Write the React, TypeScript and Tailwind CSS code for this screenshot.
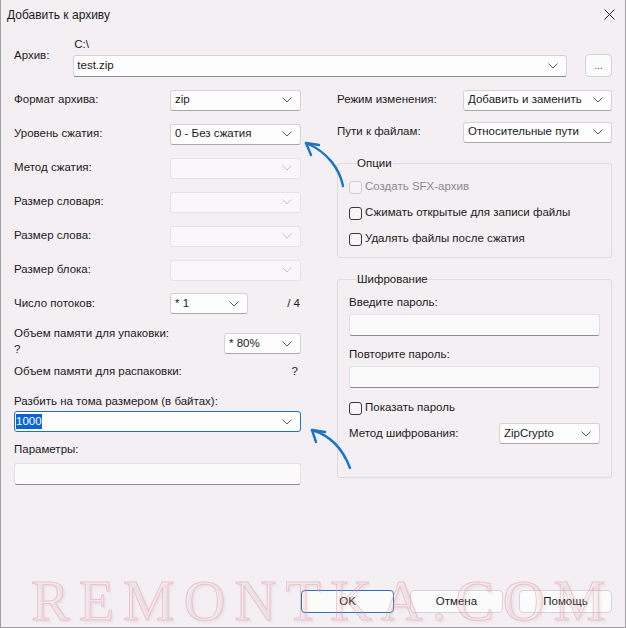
import React from 'react';

const Chevron = ({ disabled }: { disabled?: boolean }) => (
  <svg width="10" height="6" viewBox="0 0 10 6" className="shrink-0">
    <path d="M0.5 0.5L5 5L9.5 0.5" fill="none" stroke={disabled ? '#c4c2c4' : '#5a5a5a'} strokeWidth="1" />
  </svg>
);

interface SelectProps {
  value?: string;
  width: string;
  disabled?: boolean;
}

const Select: React.FC<SelectProps> = ({ value, width, disabled }) => (
  <div
    className={
      disabled
        ? `${width} h-[21px] flex items-center justify-between pl-[4px] pr-[8px] rounded-[3px] border border-[#e6e3e6] bg-[#f9f7f9]`
        : `${width} h-[21px] flex items-center justify-between pl-[4px] pr-[8px] rounded-[3px] border border-[#d4d2d4] border-b-[#a9a7a9] bg-[#fdfdfd]`
    }
  >
    <span className="leading-none whitespace-nowrap">{value}</span>
    <Chevron disabled={disabled} />
  </div>
);

const TextBox = ({ width }: { width: string }) => (
  <div className={`${width} h-[22px] rounded-[3px] border border-[#e2e0e2] border-b-[#8d8b8d] bg-[#fbfafb]`} />
);

const Checkbox = ({ label, disabled }: { label: string; disabled?: boolean }) => (
  <div className="flex items-center gap-[3px]">
    <div
      className={
        disabled
          ? 'w-[13px] h-[13px] rounded-[3px] border border-[#cfcccf] bg-[#f5f3f5]'
          : 'w-[13px] h-[13px] rounded-[3px] border border-[#3a3a3a] bg-[#f7f5f7]'
      }
    />
    <span className={disabled ? 'text-[#8e8c8e]' : ''}>{label}</span>
  </div>
);

const Row = ({ label, children }: { label: string; children: React.ReactNode }) => (
  <div className="h-[34px] flex items-center justify-between">
    <span>{label}</span>
    {children}
  </div>
);

const Button = ({ label, primary }: { label: string; primary?: boolean }) => (
  <div
    className={
      primary
        ? 'w-[93px] h-[23px] flex items-center justify-center rounded-[4px] border border-[#2a72b8] bg-[#fbfbfb]'
        : 'w-[93px] h-[23px] flex items-center justify-center rounded-[4px] border border-[#d6d4d6] bg-[#fbfbfb]'
    }
  >
    {label}
  </div>
);

export default function App() {
  return (
    <div className="w-[626px] h-[628px] relative overflow-hidden bg-[#f3eff3] border-x border-b border-[#9e9c9e] font-['Liberation_Sans',Arial,sans-serif] text-[11.5px] text-[#1b1b1b] flex flex-col">
      {/* title bar */}
      <div className="h-[29px] flex items-center justify-between pl-[6px] pr-[10px]">
        <span className="text-[12px]">Добавить к архиву</span>
        <svg width="11" height="11" viewBox="0 0 11 11">
          <path d="M0.5 0.5L10.5 10.5M10.5 0.5L0.5 10.5" stroke="#222" strokeWidth="1" />
        </svg>
      </div>

      {/* archive path */}
      <div className="flex pl-[13px] pr-[13px] mt-[8px]">
        <span className="w-[60px] pt-[10px]">Архив:</span>
        <div className="flex flex-col">
          <span className="h-[14px] leading-[14px] pl-[1px]">C:\</span>
          <div className="mt-[4px] w-[494px] h-[22px] flex items-center justify-between pl-[3px] pr-[8px] rounded-[3px] border border-[#d4d2d4] border-b-[#8d8b8d] bg-[#fdfdfd]">
            <span>test.zip</span>
            <Chevron />
          </div>
        </div>
        <div className="ml-[18px] mt-[17px] w-[27px] h-[23px] rounded-[4px] border border-[#d4d2d4] bg-[#fbfbfb] flex items-end justify-center pb-[5px] text-[10px] leading-none text-[#5a3c8c]">
          ...
        </div>
      </div>

      {/* two columns */}
      <div className="flex pl-[13px] pr-[13px] mt-[6px]">
        {/* left column */}
        <div className="w-[287px] flex flex-col">
          <Row label="Формат архива:"><Select value="zip" width="w-[131px]" /></Row>
          <Row label="Уровень сжатия:"><Select value="0 - Без сжатия" width="w-[131px]" /></Row>
          <Row label="Метод сжатия:"><Select width="w-[131px]" disabled /></Row>
          <Row label="Размер словаря:"><Select width="w-[131px]" disabled /></Row>
          <Row label="Размер слова:"><Select width="w-[131px]" disabled /></Row>
          <Row label="Размер блока:"><Select width="w-[131px]" disabled /></Row>
          <div className="h-[33px] flex items-center">
            <span className="w-[156px]">Число потоков:</span>
            <Select value="* 1" width="w-[78px]" />
            <span className="ml-auto pr-[1px]">/ 4</span>
          </div>
          <div className="mt-[5px] flex justify-between items-start">
            <div className="flex flex-col leading-[16px]">
              <span>Объем памяти для упаковки:</span>
              <span>?</span>
            </div>
            <div className="mt-[8px]">
              <Select value="* 80%" width="w-[77px]" />
            </div>
          </div>
          <div className="mt-[7px] flex justify-between leading-[14px]">
            <span>Объем памяти для распаковки:</span>
            <span className="pr-[3px]">?</span>
          </div>
          <span className="mt-[16px] leading-[14px]">Разбить на тома размером (в байтах):</span>
          <div className="mt-[3px] w-[287px] h-[21px] flex items-center justify-between pl-[1px] pr-[8px] rounded-[3px] border border-[#1e6ec2] bg-[#fdfdfd]">
            <span className="bg-[#0a64d8] text-white leading-[15px]">1000</span>
            <Chevron />
          </div>
          <span className="mt-[10px] leading-[14px]">Параметры:</span>
          <div className="mt-[7px]">
            <TextBox width="w-[287px]" />
          </div>
        </div>

        {/* right column */}
        <div className="ml-[36px] w-[276px] flex flex-col">
          <div className="h-[34px] flex items-center justify-between">
            <span>Режим изменения:</span>
            <Select value="Добавить и заменить" width="w-[149px]" />
          </div>
          <div className="h-[30px] flex items-center justify-between">
            <span>Пути к файлам:</span>
            <Select value="Относительные пути" width="w-[149px]" />
          </div>

          <fieldset className="mt-[9px] border border-[#dedbde] rounded-[3px] pl-[11px] pb-[5px]">
            <legend className="ml-[7px] px-[1px] leading-[14px]">Опции</legend>
            <div className="mt-[4px] h-[26px] flex items-center"><Checkbox label="Создать SFX-архив" disabled /></div>
            <div className="h-[26px] flex items-center"><Checkbox label="Сжимать открытые для записи файлы" /></div>
            <div className="h-[26px] flex items-center"><Checkbox label="Удалять файлы после сжатия" /></div>
          </fieldset>

          <fieldset className="mt-[14px] border border-[#dedbde] rounded-[3px] pl-[11px] pr-[11px] pb-[33px] flex flex-col">
            <legend className="ml-[7px] px-[1px] leading-[14px]">Шифрование</legend>
            <span className="mt-[9px] leading-[14px]">Введите пароль:</span>
            <div className="mt-[5px]"><TextBox width="w-full" /></div>
            <span className="mt-[11px] leading-[14px]">Повторите пароль:</span>
            <div className="mt-[5px]"><TextBox width="w-full" /></div>
            <div className="mt-[10px] h-[20px] flex items-center"><Checkbox label="Показать пароль" /></div>
            <div className="mt-[5px] flex items-center justify-between">
              <span>Метод шифрования:</span>
              <Select value="ZipCrypto" width="w-[101px]" />
            </div>
          </fieldset>
        </div>
      </div>

      {/* buttons */}
      <div className="mt-auto mb-[14px] pr-[13px] flex justify-end gap-[16px]">
        <Button label="OK" primary />
        <Button label="Отмена" />
        <Button label="Помощь" />
      </div>

      {/* watermark */}
      <div className="absolute left-[30px] top-[578px] pointer-events-none font-['Liberation_Serif',serif] text-[58px] leading-[46px] tracking-[9px] text-transparent opacity-50 [-webkit-text-stroke:1px_#e597a1] [text-shadow:2px_2px_2px_rgba(200,150,160,0.3)]">
        REMONTKA.COM
      </div>

      {/* annotation arrows */}
      <svg className="absolute left-0 top-0 pointer-events-none" width="626" height="628" viewBox="0 0 626 628">
        <g fill="none" stroke="#1b74c5" strokeWidth="2.4" strokeLinecap="round" strokeLinejoin="round">
          <path d="M342 186C339 170 327 152 305 143" />
          <path d="M305 143L318 145M305 143L310 155" />
          <path d="M349 468C343 452 331 436 311 430" />
          <path d="M311 430L324 432M311 430L315 442" />
        </g>
      </svg>
    </div>
  );
}
